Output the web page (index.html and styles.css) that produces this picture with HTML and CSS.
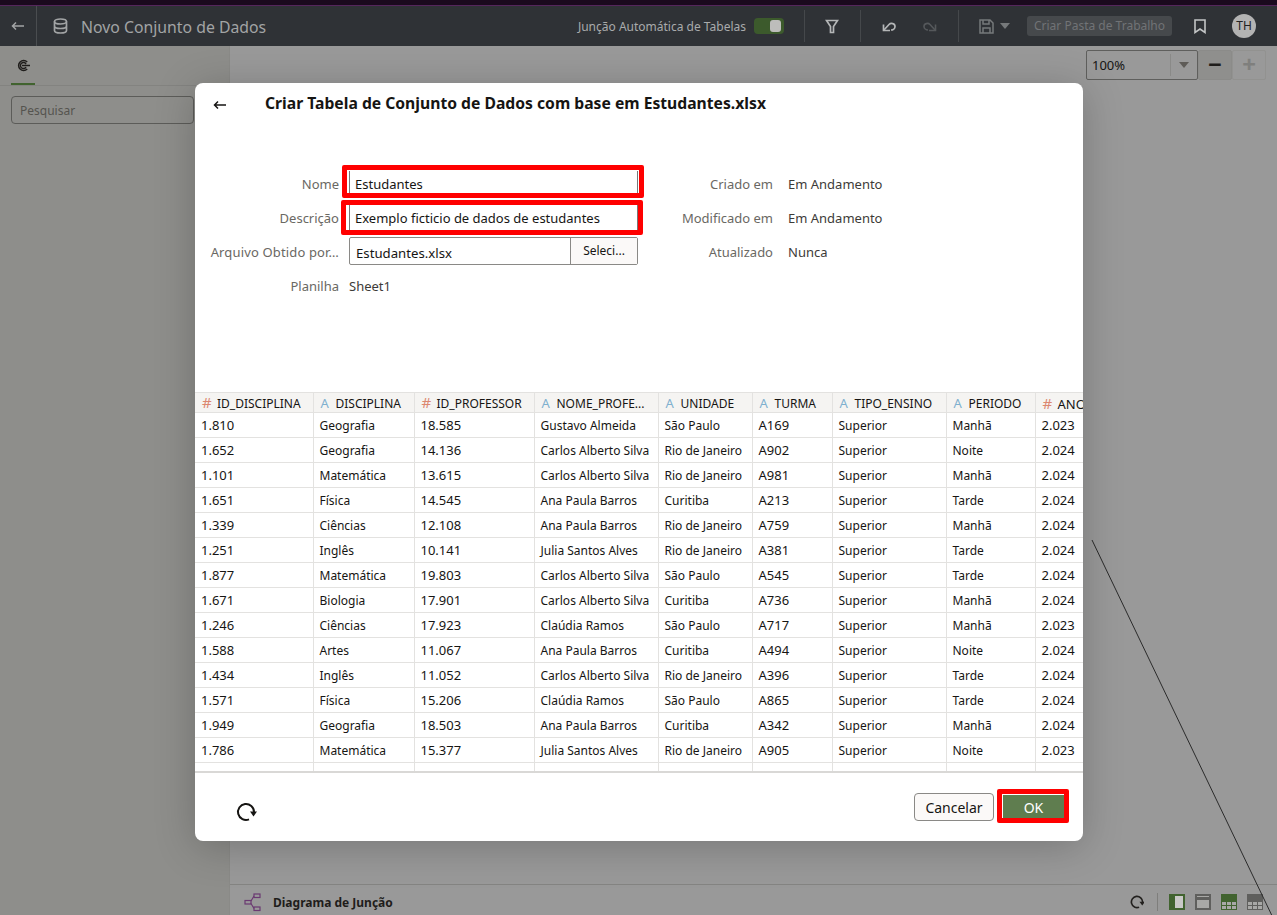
FILE: index.html
```html
<!DOCTYPE html>
<html>

<head>
    <title>Novo Conjunto de Dados</title>
    <link rel="stylesheet" href="styles.css">
</head>

<body>
    <div class="top-strip"></div>
    <header class="app-header">
        <div class="back-cell">
            <svg width="14" height="10" viewBox="0 0 14 10"><path d="M13 5H2M5 1.5 1.5 5 5 8.500" fill="none" stroke="#a2a4a5" stroke-width="1.500"/></svg>
        </div>
        <svg class="db-icon" width="15" height="16" viewBox="0 0 15 16" fill="none" stroke="#a2a4a5" stroke-width="1.700"><ellipse cx="7.500" cy="3.500" rx="6" ry="2.500"/><path d="M1.500 3.500v9c0 1.400 2.700 2.500 6 2.500s6-1.100 6-2.500v-9M1.500 8c0 1.400 2.700 2.500 6 2.500s6-1.100 6-2.500"/></svg>
        <div class="app-title">Novo Conjunto de Dados</div>
        <div class="header-tools">
            <span class="auto-join">Junção Automática de Tabelas</span>
            <span class="toggle"><span class="toggle-knob"></span></span>
            <span class="tool-sep sep-a"></span>
            <svg class="tool-icon" width="14" height="15" viewBox="0 0 14 15" fill="none" stroke="#b4b6b7" stroke-width="1.700"><path d="M1.500 1.500h11L8.500 7.500v6h-3v-6z"/></svg>
            <span class="tool-sep sep-b"></span>
            <svg class="tool-icon" width="16" height="14" viewBox="0 0 16 14" fill="none" stroke="#b4b6b7" stroke-width="1.700"><path d="M2.500 5.500v6H9"/><path d="M2.500 11.500 8 5.500c2-2 6-1 6 2 0 2-2 3.500-4 3.500"/></svg>
            <svg class="tool-icon redo" width="16" height="14" viewBox="0 0 16 14" fill="none" stroke="#55585b" stroke-width="1.600"><path d="M13.500 5.500v6H7"/><path d="M13.500 11.500 8 5.500c-2-2-6-1-6 2 0 2 2 3.500 4 3.500"/></svg>
            <span class="tool-sep sep-c"></span>
            <svg class="tool-icon save" width="15" height="15" viewBox="0 0 15 15" fill="none" stroke="#76797b" stroke-width="1.500"><path d="M1 1h10l3 3v10H1zM4 1v4h6V1M4 14V9h7v5"/></svg>
            <span class="save-caret"></span>
            <span class="workbook-btn">Criar Pasta de Trabalho</span>
            <svg class="tool-icon bookmark" width="12" height="15" viewBox="0 0 12 15" fill="none" stroke="#c3c5c6" stroke-width="1.600"><path d="M1 1h10v12.500L6 10l-5 3.500z"/></svg>
            <span class="avatar">TH</span>
        </div>
    </header>

    <div class="workspace">
        <aside class="side-panel">
            <div class="side-tabs">
                <div class="side-tab">
                    <svg width="13" height="13" viewBox="0 0 13 13" fill="none" stroke="#1f1d1b" stroke-width="1.500"><path d="M10.200 3a5 5 0 1 0 0 7"/><path d="M9 5a3 3 0 1 0 0 3"/><path d="M5 6.500h8"/></svg>
                </div>
            </div>
            <div class="side-search">Pesquisar</div>
        </aside>
        <main class="canvas">
            <div class="zoom-bar">
                <div class="zoom-select"><span class="zoom-value">100%</span><span class="zoom-arrow"><span class="zoom-caret"></span></span></div>
                <div class="zoom-btn zoom-minus">&minus;</div>
                <div class="zoom-btn zoom-plus">+</div>
            </div>
            <div class="join-bar">
                <svg class="join-icon" width="17" height="19" viewBox="0 0 17 19" fill="none" stroke="#6b3a72" stroke-width="1.200"><rect x="10" y="1" width="6" height="3.500"/><rect x="1" y="7.500" width="6" height="3.500"/><rect x="10" y="14" width="6" height="3.500"/><path d="M7 8 10 3M7 10.500l3 5"/></svg>
                <span class="join-title">Diagrama de Junção</span>
                <div class="join-tools">
                    <svg width="14" height="14" viewBox="0 0 20 20" fill="none" stroke="#23211f" stroke-width="2.400"><path d="M13 17.400A8 8 0 1 1 18 10"/><path d="M13.500 9.500h8L17.500 15z" fill="#23211f" stroke="none"/></svg>
                    <span class="join-sep"></span>
                    <span class="view-icon view-side"></span>
                    <span class="view-icon view-top"></span>
                    <span class="view-icon view-grid view-grid-on"><i></i><i></i><i></i><i></i><i></i><i></i></span>
                    <span class="view-icon view-grid"><i></i><i></i><i></i><i></i><i></i><i></i></span>
                </div>
            </div>
        </main>
    </div>

    <svg class="stray-line" width="200" height="400" viewBox="0 0 200 400"><path d="M4 10 187 392" stroke="#2b2b2b" stroke-width="1" fill="none"/></svg>

    <section class="modal">
        <div class="modal-head">
            <svg width="14" height="10" viewBox="0 0 14 10"><path d="M13 5H2M5 1.500 1.500 5 5 8.500" fill="none" stroke="#161513" stroke-width="1.500"/></svg>
            <h1>Criar Tabela de Conjunto de Dados com base em Estudantes.xlsx</h1>
        </div>

        <div class="form-area">
            <div class="form-grid form-left">
                <label>Nome</label>
                <div class="text-input">Estudantes</div>
                <label>Descrição</label>
                <div class="text-input">Exemplo ficticio de dados de estudantes</div>
                <label class="label-long">Arquivo Obtido por…</label>
                <div class="file-input"><span class="file-name">Estudantes.xlsx</span><span class="file-btn">Seleci...</span></div>
                <label>Planilha</label>
                <div class="plain-value">Sheet1</div>
            </div>
            <div class="form-grid form-right">
                <label>Criado em</label>
                <div class="plain-value">Em Andamento</div>
                <label>Modificado em</label>
                <div class="plain-value">Em Andamento</div>
                <label>Atualizado</label>
                <div class="plain-value">Nunca</div>
            </div>
        </div>

        <div class="table-wrap">
            <table class="data-table">
                <colgroup>
                    <col class="c1"><col class="c2"><col class="c3"><col class="c4"><col class="c5"><col class="c6"><col class="c7"><col class="c8"><col class="c9">
                </colgroup>
                <thead>
                    <tr>
                        <th><span class="type-num">#</span>ID_DISCIPLINA</th>
                        <th><span class="type-txt">A</span>DISCIPLINA</th>
                        <th><span class="type-num">#</span>ID_PROFESSOR</th>
                        <th><span class="type-txt">A</span>NOME_PROFE...</th>
                        <th><span class="type-txt">A</span>UNIDADE</th>
                        <th><span class="type-txt">A</span>TURMA</th>
                        <th><span class="type-txt">A</span>TIPO_ENSINO</th>
                        <th><span class="type-txt">A</span>PERIODO</th>
                        <th><span class="type-num">#</span>ANO</th>
                    </tr>
                </thead>
                <tbody>
                    <tr><td>1.810</td><td>Geografia</td><td>18.585</td><td>Gustavo Almeida</td><td>São Paulo</td><td>A169</td><td>Superior</td><td>Manhã</td><td>2.023</td></tr>
                    <tr><td>1.652</td><td>Geografia</td><td>14.136</td><td>Carlos Alberto Silva</td><td>Rio de Janeiro</td><td>A902</td><td>Superior</td><td>Noite</td><td>2.024</td></tr>
                    <tr><td>1.101</td><td>Matemática</td><td>13.615</td><td>Carlos Alberto Silva</td><td>Rio de Janeiro</td><td>A981</td><td>Superior</td><td>Manhã</td><td>2.024</td></tr>
                    <tr><td>1.651</td><td>Física</td><td>14.545</td><td>Ana Paula Barros</td><td>Curitiba</td><td>A213</td><td>Superior</td><td>Tarde</td><td>2.024</td></tr>
                    <tr><td>1.339</td><td>Ciências</td><td>12.108</td><td>Ana Paula Barros</td><td>Rio de Janeiro</td><td>A759</td><td>Superior</td><td>Manhã</td><td>2.024</td></tr>
                    <tr><td>1.251</td><td>Inglês</td><td>10.141</td><td>Julia Santos Alves</td><td>Rio de Janeiro</td><td>A381</td><td>Superior</td><td>Tarde</td><td>2.024</td></tr>
                    <tr><td>1.877</td><td>Matemática</td><td>19.803</td><td>Carlos Alberto Silva</td><td>São Paulo</td><td>A545</td><td>Superior</td><td>Tarde</td><td>2.024</td></tr>
                    <tr><td>1.671</td><td>Biologia</td><td>17.901</td><td>Carlos Alberto Silva</td><td>Curitiba</td><td>A736</td><td>Superior</td><td>Manhã</td><td>2.024</td></tr>
                    <tr><td>1.246</td><td>Ciências</td><td>17.923</td><td>Claúdia Ramos</td><td>São Paulo</td><td>A717</td><td>Superior</td><td>Manhã</td><td>2.023</td></tr>
                    <tr><td>1.588</td><td>Artes</td><td>11.067</td><td>Ana Paula Barros</td><td>Curitiba</td><td>A494</td><td>Superior</td><td>Noite</td><td>2.024</td></tr>
                    <tr><td>1.434</td><td>Inglês</td><td>11.052</td><td>Carlos Alberto Silva</td><td>Rio de Janeiro</td><td>A396</td><td>Superior</td><td>Tarde</td><td>2.024</td></tr>
                    <tr><td>1.571</td><td>Física</td><td>15.206</td><td>Claúdia Ramos</td><td>São Paulo</td><td>A865</td><td>Superior</td><td>Tarde</td><td>2.024</td></tr>
                    <tr><td>1.949</td><td>Geografia</td><td>18.503</td><td>Ana Paula Barros</td><td>Curitiba</td><td>A342</td><td>Superior</td><td>Manhã</td><td>2.024</td></tr>
                    <tr><td>1.786</td><td>Matemática</td><td>15.377</td><td>Julia Santos Alves</td><td>Rio de Janeiro</td><td>A905</td><td>Superior</td><td>Noite</td><td>2.023</td></tr>
                    <tr><td></td><td></td><td></td><td></td><td></td><td></td><td></td><td></td><td></td></tr>
                </tbody>
            </table>
        </div>

        <div class="modal-foot">
            <svg class="foot-refresh" width="21" height="21" viewBox="0 0 21 21" fill="none" stroke="#161513" stroke-width="2"><path d="M13 17.400A8 8 0 1 1 18 10"/><path d="M14 9.500h7L17.500 14.500z" fill="#161513" stroke="none"/></svg>
            <button class="btn-cancel">Cancelar</button>
            <button class="btn-ok">OK</button>
        </div>

        <div class="mark mark-name"></div>
        <div class="mark mark-desc"></div>
        <div class="mark mark-ok"></div>
    </section>
</body>

</html>
```

FILE: styles.css
```css
* {
    box-sizing: border-box;
}

html,
body {
    height: 100%;
}

body {
    margin: 0;
    position: relative;
    display: flex;
    flex-direction: column;
    overflow: hidden;
    font-family: "Noto Sans", "Open Sans", sans-serif;
    color: #161513;
    background-color: #999;
}

.top-strip {
    height: 6px;
    background-color: #1b0a1e;
    border-bottom: 1px solid #55265c;
}

.app-header {
    height: 40px;
    display: flex;
    align-items: center;
    background-color: #2f3236;
}

.back-cell {
    width: 37px;
    height: 100%;
    display: flex;
    align-items: center;
    justify-content: center;
    border-right: 1px solid #4a4d50;
}

.db-icon {
    margin-left: 16px;
}

.app-title {
    margin-left: 13px;
    padding-top: 2px;
    font-size: 15.800px;
    color: #a2a4a5;
}

.header-tools {
    margin-left: auto;
    display: flex;
    align-items: center;
    padding-right: 21px;
}

.auto-join {
    font-size: 12px;
    color: #a9abac;
}

.toggle {
    width: 30px;
    height: 16px;
    margin-left: 8px;
    padding: 2px 0 2px 16px;
    border-radius: 4px;
    background-color: #3c5a2c;
}

.toggle-knob {
    display: block;
    width: 11px;
    height: 12px;
    border-radius: 3px;
    background-color: #bdbdbb;
}

.tool-sep {
    width: 1px;
    height: 32px;
    background-color: #45484b;
}

.sep-a {
    margin: 0 20px;
}

.sep-b {
    margin: 0 20px 0 21px;
}

.sep-c {
    margin: 0 20px 0 20px;
}

.redo {
    margin-left: 25px;
}

.save-caret {
    width: 0;
    height: 0;
    margin-left: 6px;
    border-left: 5px solid transparent;
    border-right: 5px solid transparent;
    border-top: 6px solid #76797b;
}

.workbook-btn {
    width: 145px;
    height: 20px;
    margin-left: 17px;
    border-radius: 3px;
    background-color: #46494c;
    color: #717376;
    font-size: 12px;
    line-height: 20px;
    text-align: center;
}

.bookmark {
    margin-left: 22px;
}

.avatar {
    width: 24px;
    height: 24px;
    margin-left: 26px;
    border-radius: 50%;
    background-color: #b3b3b3;
    color: #222;
    font-size: 12px;
    line-height: 24px;
    text-align: center;
}

.workspace {
    flex: 1;
    display: flex;
    min-height: 0;
}

.side-panel {
    width: 230px;
    background-color: #8e8e8b;
    border-right: 1px solid #8a8a87;
}

.side-tabs {
    height: 40px;
    padding-left: 11px;
    border-bottom: 1px solid #838380;
}

.side-tab {
    width: 24px;
    height: 39px;
    padding-top: 13px;
    display: flex;
    justify-content: center;
    align-items: flex-start;
    border-bottom: 2px solid #41632f;
}

.side-search {
    width: 183px;
    height: 28px;
    margin: 10px 0 0 11px;
    padding: 1px 0 0 8px;
    border: 1px solid #5c5c59;
    border-radius: 4px;
    font-size: 12px;
    line-height: 26px;
    color: #55544f;
}

.canvas {
    flex: 1;
    display: flex;
    flex-direction: column;
    justify-content: space-between;
}

.zoom-bar {
    display: flex;
    justify-content: flex-end;
    padding: 4px 11px 0 0;
}

.zoom-select {
    width: 112px;
    height: 30px;
    display: flex;
    align-items: center;
    border: 1px solid #5f5f5d;
    border-radius: 2px;
    font-size: 13px;
}

.zoom-value {
    flex: 1;
    padding-left: 5px;
}

.zoom-arrow {
    width: 27px;
    height: 22px;
    display: flex;
    align-items: center;
    justify-content: center;
    border-left: 1px solid #8a8a88;
}

.zoom-caret {
    width: 0;
    height: 0;
    border-left: 5px solid transparent;
    border-right: 5px solid transparent;
    border-top: 6px solid #5e5b57;
}

.zoom-btn {
    width: 34px;
    height: 30px;
    border: 1px solid #8b8b89;
    border-radius: 2px;
    font-size: 24px;
    font-weight: 700;
    line-height: 26px;
    text-align: center;
}

.zoom-minus {
    background-color: #8f8f8d;
    color: #1f1d1b;
}

.zoom-plus {
    border-color: #929290;
    color: #7f7f7d;
}

.join-bar {
    height: 31px;
    display: flex;
    align-items: center;
    padding: 4px 0 0 14px;
    border-top: 1px solid #848482;
}

.join-title {
    margin-left: 12px;
    font-size: 12px;
    font-weight: 700;
    color: #1f1d1b;
}

.join-tools {
    margin-left: auto;
    display: flex;
    align-items: center;
    gap: 10px;
    padding-right: 14px;
}

.join-sep {
    width: 1px;
    height: 18px;
    margin: 0 1px 0 3px;
    background-color: #7e7e7c;
}

.view-icon {
    width: 16px;
    height: 16px;
    border: 2px solid #5f5f5d;
}

.view-side {
    border-color: #41632f;
    border-left-width: 6px;
    background-color: #c9c9c7;
}

.view-top {
    background: linear-gradient(#a8a8a6 1px, #5f5f5d 1px, #5f5f5d 4px, #a8a8a6 4px);
}

.view-grid {
    display: grid;
    grid-template-columns: repeat(3, 1fr);
    grid-auto-rows: 1fr;
    gap: 1px;
    padding-top: 3px;
    border-width: 1px;
    border-top-width: 5px;
    background-color: #5f5f5d;
}

.view-grid i {
    background-color: #a8a8a6;
}

.view-grid-on {
    border-color: #41632f;
    background-color: #41632f;
}

.stray-line {
    position: absolute;
    left: 1088px;
    top: 530px;
}

.modal {
    position: absolute;
    left: 195px;
    top: 83px;
    width: 888px;
    height: 758px;
    display: flex;
    flex-direction: column;
    background-color: #fff;
    border-radius: 8px;
    box-shadow: 0 6px 40px rgba(0, 0, 0, 0.22);
    overflow: hidden;
}

.modal-head {
    height: 84px;
    padding: 10px 0 0 18px;
    display: flex;
    align-items: flex-start;
}

.modal-head svg {
    margin-top: 7px;
}

.modal-head h1 {
    margin: 0 0 0 38px;
    font-size: 15.700px;
    line-height: 20px;
    font-weight: 700;
}

.form-area {
    height: 225px;
    display: flex;
    font-size: 13px;
}

.form-grid {
    display: grid;
    grid-auto-rows: 34px;
    align-items: center;
}

.form-grid label {
    text-align: right;
    color: #6a6863;
    white-space: nowrap;
    overflow: hidden;
    text-overflow: ellipsis;
}

.form-grid .label-long {
    letter-spacing: 0.15px;
}

.form-left {
    width: 443px;
    margin-left: 15px;
    grid-template-columns: 129px 289px;
    column-gap: 10px;
}

.form-right {
    margin-left: 15px;
    grid-template-columns: 105px auto;
    column-gap: 15px;
}

.text-input {
    height: 26px;
    padding-left: 5px;
    line-height: 26px;
    border-left: 1px solid #777;
    border-right: 1px solid #777;
    white-space: nowrap;
}

.file-input {
    height: 28px;
    margin-bottom: 2px;
    display: flex;
    border: 1px solid #8a8986;
    border-radius: 2px;
}

.file-name {
    flex: 1;
    padding: 6px 0 0 6px;
    font-size: 13.200px;
}

.file-btn {
    width: 67px;
    font-size: 12px;
    line-height: 26px;
    text-align: center;
    border-left: 1px solid #8a8986;
    background-color: #fbf9f8;
}

.plain-value {
    color: #3d3b38;
    white-space: nowrap;
}

.table-wrap {
    height: 381px;
    overflow: hidden;
    border-bottom: 2px solid #d9d8d6;
}

.data-table {
    table-layout: fixed;
    width: 900px;
    border-collapse: collapse;
    font-size: 12px;
}

.c1 { width: 118px; }
.c2 { width: 101px; }
.c3 { width: 120px; }
.c4 { width: 124px; }
.c5 { width: 94px; }
.c6 { width: 80px; }
.c7 { width: 114px; }
.c8 { width: 89px; }
.c9 { width: 60px; }

.data-table th {
    height: 20px;
    padding: 2px 0 0 7px;
    border: 1px solid #e3e2e0;
    background-color: #f5f4f2;
    font-weight: 400;
    line-height: 16px;
    text-align: left;
    white-space: nowrap;
    overflow: hidden;
}

.data-table th:nth-child(9) {
    font-size: 13px;
}

.data-table td {
    height: 25px;
    padding: 0 0 0 6px;
    border: 1px solid #e3e2e0;
    white-space: nowrap;
    overflow: hidden;
}

/* number-like columns run a bit wider in the reference */
.data-table td:nth-child(1),
.data-table td:nth-child(3),
.data-table td:nth-child(6),
.data-table td:nth-child(9) {
    font-size: 13px;
}

.data-table tr td:first-child,
.data-table tr th:first-child {
    border-left: 0;
}

.type-num,
.type-txt {
    display: inline-block;
    width: 15px;
    font-size: 13px;
    line-height: 14px;
}

.type-num {
    color: #dc8770;
    font-size: 15px;
}

.type-txt {
    color: #7fb0cf;
}

.modal-foot {
    flex: 1;
    display: flex;
    align-items: flex-start;
    padding: 20px 0 0 41px;
}

.foot-refresh {
    margin-top: 9px;
}

.btn-cancel {
    width: 80px;
    height: 28px;
    margin-left: auto;
    border: 1px solid #8a8986;
    border-radius: 4px;
    background-color: #fbf9f8;
    color: #161513;
    font: 14px "Noto Sans", sans-serif;
}

.btn-ok {
    width: 61px;
    height: 26px;
    margin: 2px 19px 0 9px;
    padding-bottom: 2px;
    border: 0;
    background-color: #5f7d4f;
    color: #fff;
    font: 14px "Noto Sans", sans-serif;
}

.mark {
    position: absolute;
    border: 5px solid #f00;
    border-radius: 2px;
}

.mark-name {
    left: 147px;
    top: 82px;
    width: 302px;
    height: 33px;
}

.mark-desc {
    left: 146px;
    top: 117px;
    width: 302px;
    height: 35px;
}

.mark-ok {
    left: 802px;
    top: 706px;
    width: 72px;
    height: 34px;
}
```
